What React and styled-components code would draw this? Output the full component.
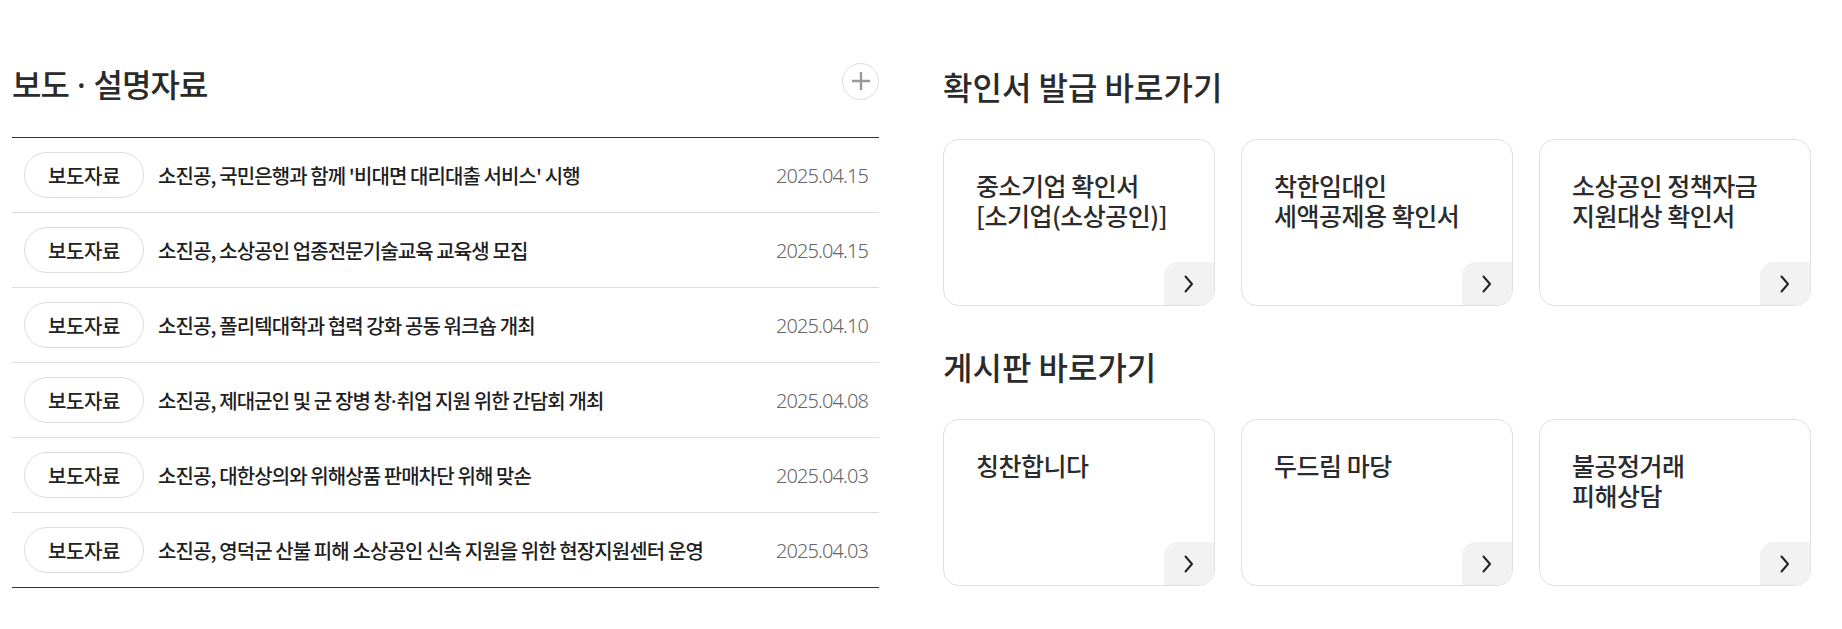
import React from 'react';
import styled, { createGlobalStyle } from 'styled-components';

const GlobalStyle = createGlobalStyle`
  body {
    margin: 0;
    background: #fff;
    font-family: "Noto Sans CJK KR", "Noto Sans", sans-serif;
    color: #222;
  }
  ul { margin: 0; padding: 0; list-style: none; }
`;

const news = [
  { title: "소진공, 국민은행과 함께 '비대면 대리대출 서비스' 시행", date: '2025.04.15' },
  { title: '소진공, 소상공인 업종전문기술교육 교육생 모집', date: '2025.04.15' },
  { title: '소진공, 폴리텍대학과 협력 강화 공동 워크숍 개최', date: '2025.04.10' },
  { title: '소진공, 제대군인 및 군 장병 창·취업 지원 위한 간담회 개최', date: '2025.04.08' },
  { title: '소진공, 대한상의와 위해상품 판매차단 위해 맞손', date: '2025.04.03' },
  { title: '소진공, 영덕군 산불 피해 소상공인 신속 지원을 위한 현장지원센터 운영', date: '2025.04.03' },
];

const certLinks = [
  ['중소기업 확인서', '[소기업(소상공인)]'],
  ['착한임대인', '세액공제용 확인서'],
  ['소상공인 정책자금', '지원대상 확인서'],
];

const boardLinks = [['칭찬합니다'], ['두드림 마당'], ['불공정거래', '피해상담']];

// the CJK font draws "·" full width; the original uses a narrow one
const withNarrowDots = (text) =>
  text.split('·').flatMap((part, i) => (i === 0 ? [part] : [<NarrowDot key={i}>·</NarrowDot>, part]));

const Chevron = () => (
  <svg width="10" height="18" viewBox="0 0 10 18" fill="none">
    <path d="M1.5 1.5 L8 9 L1.5 16.5" stroke="#222" strokeWidth="2" strokeLinecap="round" strokeLinejoin="round" />
  </svg>
);

const LinkCards = ({ items }) => (
  <CardGrid>
    {items.map((lines, i) => (
      <Card key={i}>
        <CardText>
          {lines.map((l, j) => (
            <CardLine key={j}>{l}</CardLine>
          ))}
        </CardText>
        <CardArrow>
          <Chevron />
        </CardArrow>
      </Card>
    ))}
  </CardGrid>
);

const App = () => {
  return (
    <Page>
      <GlobalStyle />
      <NewsSection>
        <NewsHeader>
          <SectionTitle>
            보도<NarrowDot spaced>·</NarrowDot>설명자료
          </SectionTitle>
          <MoreButton aria-label="더보기">
            <svg width="20" height="20" viewBox="0 0 20 20">
              <path d="M10 1 V19 M1 10 H19" stroke="#999" strokeWidth="2.4" />
            </svg>
          </MoreButton>
        </NewsHeader>
        <NewsList>
          {news.map((item, i) => (
            <NewsRow key={i}>
              <Badge>보도자료</Badge>
              <NewsTitle>{withNarrowDots(item.title)}</NewsTitle>
              <NewsDate>{item.date}</NewsDate>
            </NewsRow>
          ))}
        </NewsList>
      </NewsSection>

      <LinkSection>
        <LinkTitle>확인서 발급 바로가기</LinkTitle>
        <LinkCards items={certLinks} />
        <LinkTitle second>게시판 바로가기</LinkTitle>
        <LinkCards items={boardLinks} />
      </LinkSection>
    </Page>
  );
};

const Page = styled.div`
  display: flex;
  gap: 64px;
  padding: 60px 0 40px 12px;
`;

const NewsSection = styled.section`
  width: 867px;
  flex-shrink: 0;
`;

const NewsHeader = styled.div`
  display: flex;
  align-items: center;
  justify-content: space-between;
  height: 48px;
  margin-bottom: 29px;
`;

const SectionTitle = styled.h2`
  margin: 0;
  font-size: 32px;
  font-weight: 500;
  letter-spacing: -1px;
  line-height: 40px;
  color: #2b2b2b;
`;

const NarrowDot = styled.span`
  font-family: "Noto Sans", sans-serif;
  margin: 0 ${(p) => (p.spaced ? '8px' : '0')};
  letter-spacing: 0;
`;

const MoreButton = styled.button`
  width: 37px;
  height: 37px;
  margin-top: -6px;
  border: 1px solid #dcdcdc;
  border-radius: 50%;
  background: #fff;
  display: flex;
  align-items: center;
  justify-content: center;
  padding: 0;
`;

const NewsList = styled.ul`
  border-top: 1px solid #333;
`;

const NewsRow = styled.li`
  display: flex;
  align-items: center;
  height: 75px;
  box-sizing: border-box;
  padding: 0 11px 0 12px;
  border-bottom: 1px solid #dcdcdc;

  &:last-child {
    border-bottom-color: #333;
  }
`;

const Badge = styled.span`
  flex-shrink: 0;
  width: 120px;
  height: 46px;
  box-sizing: border-box;
  border: 1px solid #dcdcdc;
  border-radius: 23px;
  display: flex;
  align-items: center;
  justify-content: center;
  font-size: 20px;
  font-weight: 500;
  letter-spacing: -0.4px;
  color: #222;
`;

const NewsTitle = styled.span`
  flex: 1;
  margin-left: 14px;
  font-size: 20px;
  font-weight: 500;
  letter-spacing: -0.9px;
  color: #1f1f1f;
  white-space: nowrap;
  overflow: hidden;
  text-overflow: ellipsis;
`;

const NewsDate = styled.span`
  flex-shrink: 0;
  margin-left: 20px;
  font-family: "Noto Sans", sans-serif;
  font-size: 20px;
  font-weight: 300;
  letter-spacing: -0.9px;
  color: #666;
`;

const LinkSection = styled.section`
  width: 868px;
  flex-shrink: 0;
`;

const LinkTitle = styled.h2`
  margin: ${(p) => (p.second ? '34px' : '0')} 0 27px;
  height: 52px;
  display: flex;
  align-items: center;
  font-size: 32px;
  font-weight: 500;
  letter-spacing: 0;
  color: #2b2b2b;
`;

const CardGrid = styled.div`
  display: grid;
  grid-template-columns: repeat(3, 1fr);
  gap: 26px;
`;

const Card = styled.a`
  position: relative;
  display: block;
  height: 167px;
  box-sizing: border-box;
  padding: 30px 32px;
  border: 1px solid #e1e1e1;
  border-radius: 16px;
  overflow: hidden;
  background: #fff;
`;

const CardText = styled.p`
  margin: 0;
  display: flex;
  flex-direction: column;
  font-size: 25px;
  font-weight: 500;
  letter-spacing: -0.5px;
  color: #2b2b2b;
`;

const CardLine = styled.span`
  line-height: 30px;
`;

const CardArrow = styled.span`
  position: absolute;
  right: 0;
  bottom: 0;
  width: 50px;
  height: 43px;
  background: #f2f2f2;
  border-top-left-radius: 14px;
  display: flex;
  align-items: center;
  justify-content: center;
`;

export default App;
